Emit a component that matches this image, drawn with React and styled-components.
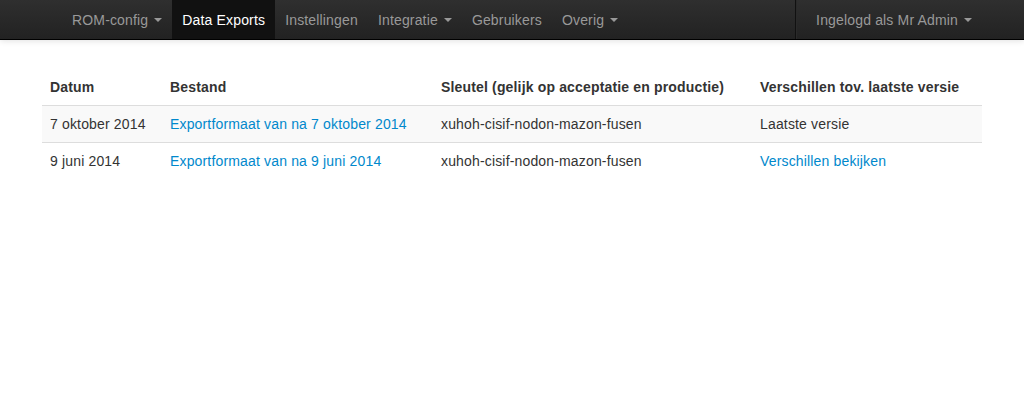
import React from "react"
import styled, { createGlobalStyle } from "styled-components"

const GlobalStyle = createGlobalStyle`
  body {
    margin: 0;
    background: #fff;
    font-family: "Liberation Sans", Arial, sans-serif;
    font-size: 14px;
    line-height: 20px;
    letter-spacing: 0.16px;
    color: #333;
  }
`

const navLeft = [
  { label: "ROM-config", caret: true },
  { label: "Data Exports", active: true },
  { label: "Instellingen" },
  { label: "Integratie", caret: true },
  { label: "Gebruikers" },
  { label: "Overig", caret: true },
]

const rows = [
  {
    datum: "7 oktober 2014",
    bestand: "Exportformaat van na 7 oktober 2014",
    sleutel: "xuhoh-cisif-nodon-mazon-fusen",
    verschil: "Laatste versie",
  },
  {
    datum: "9 juni 2014",
    bestand: "Exportformaat van na 9 juni 2014",
    sleutel: "xuhoh-cisif-nodon-mazon-fusen",
    verschil: "Verschillen bekijken",
    verschilLink: true,
  },
]

const App = () => {
  return (
    <>
      <GlobalStyle />
      <Navbar>
        <NavContainer>
          <Nav>
            {navLeft.map((item) => (
              <NavItem key={item.label} $active={item.active}>
                {item.label}
                {item.caret && <Caret />}
              </NavItem>
            ))}
          </Nav>
          <Nav>
            <Divider />
            <NavItem>
              Ingelogd als Mr Admin
              <Caret />
            </NavItem>
          </Nav>
        </NavContainer>
      </Navbar>
      <Content>
        <Table>
          <thead>
            <tr>
              <Th $w={104}>Datum</Th>
              <Th $w={255}>Bestand</Th>
              <Th $w={303}>Sleutel (gelijk op acceptatie en productie)</Th>
              <Th>Verschillen tov. laatste versie</Th>
            </tr>
          </thead>
          <tbody>
            {rows.map((r, i) => (
              <Tr key={i} $striped={i % 2 === 0}>
                <Td>{r.datum}</Td>
                <Td>
                  <Link href="#">{r.bestand}</Link>
                </Td>
                <Td>{r.sleutel}</Td>
                <Td>{r.verschilLink ? <Link href="#">{r.verschil}</Link> : r.verschil}</Td>
              </Tr>
            ))}
          </tbody>
        </Table>
      </Content>
    </>
  )
}

export default App

const Navbar = styled.div`
  height: 40px;
  box-sizing: border-box;
  background-image: linear-gradient(to bottom, #2f2f2f, #222222);
  border-bottom: 1px solid #000;
  box-shadow: 0 1px 6px rgba(0, 0, 0, 0.12);
`

const NavContainer = styled.div`
  width: 940px;
  box-sizing: border-box;
  padding: 0 0 0 20px;
  margin: 0 auto;
  display: flex;
  justify-content: space-between;
`

const Nav = styled.div`
  display: flex;
  height: 39px;
`

const NavItem = styled.div`
  display: flex;
  align-items: center;
  padding: 0 10px;
  height: 39px;
  color: ${(p) => (p.$active ? "#fff" : "#999")};
  background: ${(p) => (p.$active ? "#111" : "transparent")};
  font-size: 14px;
  white-space: nowrap;
`

const Caret = styled.span`
  display: inline-block;
  width: 0;
  height: 0;
  margin-left: 6px;
  margin-top: 1px;
  border-top: 4px solid #999;
  border-left: 4px solid transparent;
  border-right: 4px solid transparent;
`

const Divider = styled.div`
  height: 39px;
  margin: 0 9px;
  border-left: 1px solid #111;
  border-right: 1px solid #2a2a2a;
`

const Content = styled.div`
  width: 940px;
  margin: 0 auto;
  padding-top: 29px;
`

const Table = styled.table`
  width: 100%;
  border-collapse: collapse;
  border-spacing: 0;
`

const Th = styled.th`
  width: ${(p) => (p.$w ? `${p.$w}px` : "auto")};
  text-align: left;
  font-weight: bold;
  padding: 8px;
  line-height: 20px;
  vertical-align: bottom;
  border-bottom: 1px solid #ddd;
`

const Tr = styled.tr`
  background: ${(p) => (p.$striped ? "#f9f9f9" : "transparent")};
`

const Td = styled.td`
  padding: 8px;
  line-height: 20px;
  border-top: 1px solid #ddd;
`

const Link = styled.a`
  color: #0088cc;
  text-decoration: none;
`
